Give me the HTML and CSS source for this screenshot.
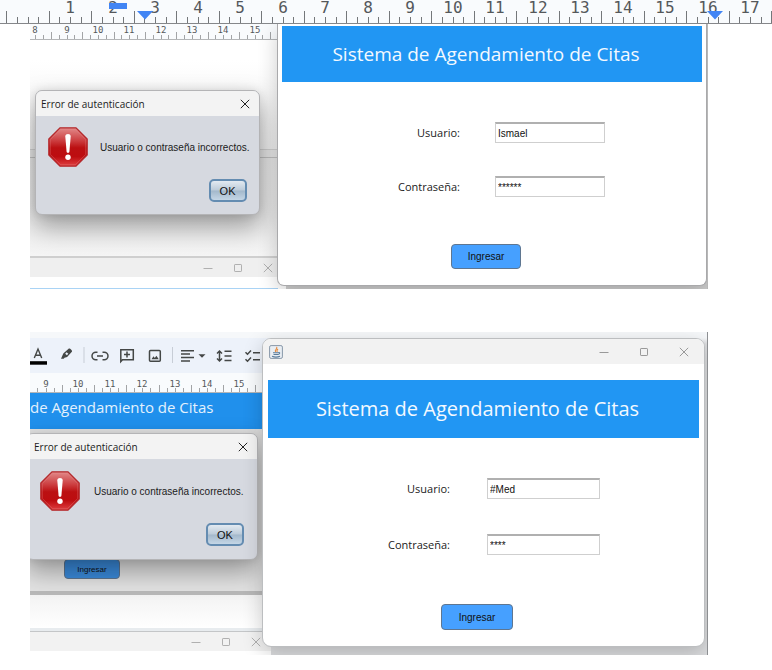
FILE: index.html
```html
<!DOCTYPE html>
<html lang="es">
<head>
<meta charset="utf-8">
<title>Sistema de Agendamiento de Citas</title>
<link rel="stylesheet" href="styles.css">
</head>
<body>
<svg class="defs" aria-hidden="true">
  <defs>
    <linearGradient id="red" x1="0" y1="0" x2="0" y2="1">
      <stop offset="0" stop-color="#e28a8a"/>
      <stop offset=".35" stop-color="#cb3a3c"/>
      <stop offset=".52" stop-color="#bb1012"/>
      <stop offset=".75" stop-color="#bd0d10"/>
      <stop offset="1" stop-color="#e04042"/>
    </linearGradient>
    <symbol id="stop" viewBox="0 0 40 40">
      <path d="M12 .8h16L39.200 12v16L28 39.200H12L.8 28V12z" fill="url(#red)" stroke="#b3282b" stroke-width="1.200"/>
      <path d="M12.600 2.300h14.800L37.700 12.600v14.800L27.400 37.700H12.600L2.300 27.400V12.600z" fill="none" stroke="#e58c8c" stroke-opacity=".4" stroke-width=".8"/>
      <path d="M17.300 9.500c0-3.200 5.400-3.200 5.400 0l-1.300 15.300c-.2 1.500-2.600 1.500-2.800 0z" fill="#fff"/>
      <circle cx="20" cy="30.300" r="2.700" fill="#fff"/>
    </symbol>
    <symbol id="close" viewBox="0 0 10 10"><path d="M.8.8l8.400 8.400M9.200.8L.8 9.200" fill="none" stroke="currentColor" stroke-width="1"/></symbol>
    <symbol id="max" viewBox="0 0 10 10"><rect x="1.500" y="1.500" width="7" height="7" rx=".6" fill="none" stroke="currentColor"/></symbol>
    <symbol id="min" viewBox="0 0 10 10"><path d="M.5 5.500h9" fill="none" stroke="currentColor"/></symbol>
  </defs>
</svg>

<header class="page-ruler">
  <svg class="ruler" data-start="27.600" data-step="42.500" data-from="0" data-to="17" data-tall="12" data-short="6" data-base="13" data-height="23" data-extent="772"></svg>
  <svg class="markers" viewBox="0 0 772 24" aria-hidden="true">
    <path d="M109 3h18v6h-18zM137 11h16l-8 8.500zM707 11h16l-8 8.500z" fill="#4285f4"/>
  </svg>
</header>

<main>
  <section class="shot">
    <div class="mini-ruler">
      <svg class="ruler" data-start="5.200" data-step="31.350" data-from="8" data-to="15" data-tall="7" data-short="4" data-base="9" data-height="15" data-extent="248"></svg>
    </div>
    <div class="canvas tall-gap"></div>
    <div class="seam"></div>
    <div class="canvas grey-gap"></div>
    <div class="back-bar">
      <svg><use href="#min"/></svg><svg><use href="#max"/></svg><svg><use href="#close"/></svg>
    </div>
    <div class="back-foot blue-edge"></div>

    <div class="dialog first" role="dialog" aria-labelledby="d1">
      <div class="dialog-head"><h2 id="d1">Error de autenticación</h2><button class="x" type="button" aria-label="Cerrar"><svg><use href="#close"/></svg></button></div>
      <div class="dialog-body">
        <svg class="stop"><use href="#stop"/></svg>
        <p>Usuario o contraseña incorrectos.</p>
        <button class="ok" type="button">OK</button>
      </div>
    </div>

    <div class="window cropped">
      <h1>Sistema de Agendamiento de Citas</h1>
      <form>
        <label for="u1">Usuario:</label><input id="u1" type="text" value="Ismael">
        <label for="p1">Contraseña:</label><input id="p1" class="secret" type="text" value="******">
        <button class="enter" type="button">Ingresar</button>
      </form>
    </div>
  </section>

  <section class="shot second">
    <div class="toolbar">
      <svg viewBox="0 0 233 35" aria-hidden="true">
        <g fill="none" stroke="#444746" stroke-width="1.500">
          <path d="M4.300 20L8 11l3.700 9M5.500 17.200h5" stroke-width="1.400"/>
          <path d="M67.500 14.200h-1.700a3.800 3.800 0 0 0 0 7.600h1.700M72.500 14.200h1.700a3.800 3.800 0 0 1 0 7.600h-1.700M67 18h6"/>
          <path d="M90.800 23.500V11.700h12.500v10H92.500zM97 13.500v6M94 16.500h6"/>
          <rect x="119.500" y="12.500" width="10.800" height="10.800" rx="1"/>
          <path d="M151 12.700h13M151 16.100h9M151 19.500h13M151 22.900h9"/>
          <path d="M194.500 13.200h7M194.500 17.900h7M194.500 22.600h7M189.500 13.500v9M187 15.500l2.500-2.500 2.500 2.500M187 20.500l2.500 2.500 2.500-2.500"/>
          <path d="M223 14.700h7M223 21.700h7M215.500 14.200l2 2 3.500-3.700M215.500 21.200l2 2 3.500-3.700"/>
        </g>
        <path d="M0 23.200h17v3.500H0z" fill="#000"/>
        <path d="M31 20.800l2.300-5.300 5.300-4.800c1-.8 4.200 1.800 3.300 3l-4.800 5.300-2.600.8-.8 1z" fill="#444746"/>
        <path d="M35.200 15.700l1.700 1.600 1.400-1.500-1.700-1.600z" fill="#edf2fa"/>
        <path d="M121.500 21.300l2-3 1.300 1.600 1.600-2.200 2.400 3.600z" fill="#444746"/>
        <path d="M168.500 16.200h7l-3.500 3.600z" fill="#444746"/>
        <path d="M54 9v16M142.500 9v16" stroke="#c7cdd6"/>
      </svg>
    </div>
    <div class="mini-ruler lower">
      <svg class="ruler" data-start="15.500" data-step="32.300" data-from="9" data-to="15" data-tall="7" data-short="4" data-base="14" data-height="19" data-extent="233"></svg>
    </div>
    <div class="back-title">de Agendamiento de Citas</div>
    <div class="back-form"><button class="enter small" type="button">Ingresar</button></div>
    <div class="back-gap"></div>
    <div class="back-bar light">
      <svg><use href="#min"/></svg><svg><use href="#max"/></svg><svg><use href="#close"/></svg>
    </div>
    <div class="back-foot"></div>

    <div class="dialog large" role="dialog" aria-labelledby="d2">
      <div class="dialog-head"><h2 id="d2">Error de autenticación</h2><button class="x" type="button" aria-label="Cerrar"><svg><use href="#close"/></svg></button></div>
      <div class="dialog-body">
        <svg class="stop"><use href="#stop"/></svg>
        <p>Usuario o contraseña incorrectos.</p>
        <button class="ok" type="button">OK</button>
      </div>
    </div>

    <div class="window full">
      <div class="window-bar">
        <svg class="java" viewBox="0 0 14 14" aria-hidden="true">
          <rect x=".6" y=".6" width="12.800" height="12.800" rx="1.500" fill="#e9eef3" stroke="#8797a8"/>
          <path d="M7.500 2c1.800 1.700-2.700 2.500-.8 5M9 4c-1.600 1-1.400 1.600-.8 3" fill="none" stroke="#e8893a" stroke-width="1.100"/>
          <path d="M4 7.800h5.500M4.500 9.500h4.500M9.500 7.500c2-.2 1.200 2-.5 2M3 11.300c2 .8 6 .8 8 0" fill="none" stroke="#5b7c9b" stroke-width="1.100"/>
        </svg>
        <svg><use href="#min"/></svg><svg><use href="#max"/></svg><svg><use href="#close"/></svg>
      </div>
      <h1>Sistema de Agendamiento de Citas</h1>
      <form>
        <label for="u2">Usuario:</label><input id="u2" type="text" value="#Med">
        <label for="p2">Contraseña:</label><input id="p2" class="secret" type="text" value="****">
        <button class="enter" type="button">Ingresar</button>
      </form>
    </div>
  </section>
</main>
<script src="rulers.js"></script>
</body>
</html>
```
FILE: styles.css
```css
* { box-sizing: border-box; }

body {
  margin: 0;
  background: #fff;
  font-family: "Open Sans", "Noto Sans", sans-serif;
  color: #1b1b1b;
}

h1, h2, p { margin: 0; font-weight: 400; }
button { padding: 0; margin: 0; font-family: "Liberation Sans", Arial, sans-serif; }
svg { display: block; }
.defs { position: absolute; width: 0; height: 0; }

/* Rulers */
.page-ruler {
  position: relative;
  height: 24px;
  background: #f9fbfd;
  border-bottom: 1px solid #85878a;
}
.ruler { overflow: visible; }
.ruler text {
  font-family: "DejaVu Sans Mono", monospace;
  font-size: 16px;
  fill: #55585b;
  text-anchor: middle;
}
.ruler path { stroke: #74777a; stroke-width: 1; shape-rendering: crispEdges; }
.page-ruler .ruler { overflow: hidden; }
.markers { position: absolute; left: 0; top: 0; width: 772px; height: 24px; }
.mini-ruler {
  height: 16px;
  overflow: hidden;
  background: #f9fbfd;
  border-bottom: 1px solid #b4b6b8;
}
.mini-ruler.lower { height: 20px; }
.mini-ruler text { font-size: 9px; }
.mini-ruler path { stroke: #a2a4a6; }

/* Captures */
.shot {
  position: relative;
  margin: 0 64px 43px 30px;
  overflow: hidden;
  border-right: 1px solid #b8b8b8;
  background: linear-gradient(90deg, transparent 256px, #cfcfcf 256px);
}
.shot.second {
  border-right-color: #8d8f92;
  background: linear-gradient(#f6f8fa 6px, #dcdddf 12px);
  padding-top: 6px;
  margin-bottom: 0;
}
.shot > div:not(.window):not(.dialog) { width: 248px; }
.shot.second > div:not(.window):not(.dialog) { width: 241px; }

.tall-gap { height: 109px; background: linear-gradient(#fff 20px, #f1f1f1); }
.seam { height: 9px; background: #e9e9e9; border-top: 1px solid #d3d3d3; border-bottom: 1px solid #c2c2c2; }
.grey-gap { height: 98px; background: linear-gradient(#e9e9e9, #ececec 60%, #f5f5f5); }
.back-bar {
  display: flex;
  justify-content: flex-end;
  align-items: center;
  gap: 20px;
  height: 21px;
  padding-right: 5px;
  background: #efefef;
  border-top: 2px solid #cfcfcf;
  color: #b0b0b0;
}
.back-bar svg { width: 10px; height: 10px; }
.back-bar.light { height: 20px; background: #f2f2f2; border-top: 1px solid #c4c6c8; padding-right: 10px; }
.back-foot { height: 4px; background: #fff; }
.back-foot.blue-edge { height: 12px; border-bottom: 1px solid #a9d3f5; }

.toolbar { height: 35px; background: #edf2fa; }
.toolbar svg { width: 233px; height: 35px; }
.back-title {
  height: 36px;
  background: #2090ec;
  color: #e3f1fd;
  font-size: 15px;
  line-height: 28px;
  white-space: nowrap;
}
.back-form {
  display: flex;
  align-items: flex-end;
  height: 166px;
  padding: 0 0 12px 34px;
  background: #e3e3e3;
  border-bottom: 4px solid #b9b9b9;
}
.back-gap { height: 36px; background: linear-gradient(#f3f3f3, #fff); border-bottom: 3px solid #e8ecef; }

/* Message dialogs */
.dialog {
  position: absolute;
  border: 1px solid #b4b4b6;
  border-radius: 7px;
  background: #d6d9e0;
  box-shadow: 0 12px 26px rgba(0, 0, 0, .34), 0 0 10px rgba(0, 0, 0, .1);
}
.dialog.first { left: 5px; top: 66px; width: 225px; }
.dialog.large { left: -4px; top: 101px; width: 232px; }
.dialog-head {
  display: flex;
  align-items: center;
  justify-content: space-between;
  height: 25px;
  padding: 0 9px 0 5px;
  border-radius: 6px 6px 0 0;
  background: #f3f3f3;
}
.dialog.large .dialog-head { padding-left: 7px; }
.dialog h2 { font-size: 10px; line-height: 16px; }
.dialog .x { width: 10px; height: 10px; border: 0; background: none; color: #222; }
.x svg { width: 10px; height: 10px; }
.dialog-body {
  display: grid;
  grid-template-columns: 40px 1fr;
  column-gap: 12px;
  align-items: center;
  padding: 11px 13px 12px 12px;
}
.dialog.large .dialog-body { padding: 12px 13px 13px; column-gap: 14px; }
.stop { width: 40px; height: 40px; }
.dialog p {
  font-family: "Liberation Sans", Arial, sans-serif;
  font-size: 10px;
  white-space: nowrap;
}
.ok {
  grid-column: 2;
  justify-self: end;
  width: 38px;
  height: 23px;
  margin-top: 12px;
  border: 2px solid #648cb1;
  border-radius: 5px;
  background: linear-gradient(#e3eaf1, #bccbd9 48%, #a3b8cb 52%, #c4d6e6);
  font-size: 11px;
  color: #111;
}
.first .ok { margin-right: 3px; }

/* Login windows */
.window {
  position: absolute;
  right: 1px;
  background: #fff;
  border: 1px solid #a9a9ab;
  box-shadow: 0 6px 20px rgba(0, 0, 0, .2);
}
.window.cropped { left: 247px; top: 0; right: 0; border-top: 0; border-radius: 0 0 7px 7px; padding: 2px 4px 16px; }
.window.full { left: 232px; top: 6px; right: 2px; border-color: #bcbec0; border-radius: 9px; padding-bottom: 16px; }
.window h1 {
  height: 56px;
  padding-right: 12px;
  background: #2196f3;
  color: #f3f9ff;
  font-size: 19px;
  line-height: 56px;
  text-align: center;
  white-space: nowrap;
}
.window.full h1 { height: 58px; margin: 16px 5px 0; font-size: 20px; line-height: 58px; }
.window-bar {
  display: flex;
  align-items: center;
  gap: 30px;
  height: 25px;
  padding: 0 15px 0 6px;
  border-radius: 8px 8px 0 0;
  background: #f2f2f2;
  color: #999;
}
.window-bar svg { width: 10px; height: 10px; }
.window-bar .java { width: 14px; height: 14px; margin-right: auto; }
form {
  display: grid;
  grid-template-columns: 178px 110px;
  column-gap: 35px;
  row-gap: 33px;
  align-items: center;
  padding-top: 40px;
}
.full form { grid-template-columns: 187px 113px; column-gap: 37px; row-gap: 35px; padding-top: 40px; }
form label { justify-self: end; font-size: 11px; line-height: 16px; }
form input {
  width: 100%;
  height: 21px;
  padding: 0 2px;
  border: 1px solid #cfcfcf;
  border-top: 2px solid #b0b0b0;
  background: #fff;
  font: 10px "Liberation Sans", Arial, sans-serif;
  color: #111;
}
.enter {
  width: 70px;
  height: 25px;
  border: 1px solid #5f7690;
  border-radius: 4px;
  background: #46a0ff;
  font-size: 10px;
  color: #111;
}
form .enter { grid-column: 1 / -1; margin: 14px 0 0 169px; }
.full form .enter { width: 72px; height: 26px; margin: 14px 0 0 178px; }
.enter.small { width: 56px; height: 20px; background: #3a8bdc; font-size: 8px; }
```
FILE: rulers.js
```js
// Draws the tick marks and numbers of every ruler from its data attributes.
const NS = "http://www.w3.org/2000/svg";

document.querySelectorAll("svg.ruler").forEach((svg) => {
  const d = svg.dataset;
  const [start, step, from, to] = [+d.start, +d.step, +d.from, +d.to];
  const [tall, short, base, height, extent] = [+d.tall, +d.short, +d.base, +d.height, +d.extent];
  svg.setAttribute("width", extent);
  svg.setAttribute("height", height);

  let path = "";
  for (let i = -4; start + (i * step) / 4 < extent; i++) {
    const x = Math.round(start + (i * step) / 4);
    if (x < 0) continue;
    const size = (i + 400) % 4 === 2 ? tall : short;
    path += `M${x + 0.5} ${height}v${-size}`;
  }
  const ticks = document.createElementNS(NS, "path");
  ticks.setAttribute("d", path);
  svg.append(ticks);

  for (let n = from; n <= to; n++) {
    if (n === 0) continue;
    const text = document.createElementNS(NS, "text");
    text.setAttribute("x", Math.round(start + (n - from) * step));
    text.setAttribute("y", base);
    text.textContent = n;
    svg.append(text);
  }
});
```
